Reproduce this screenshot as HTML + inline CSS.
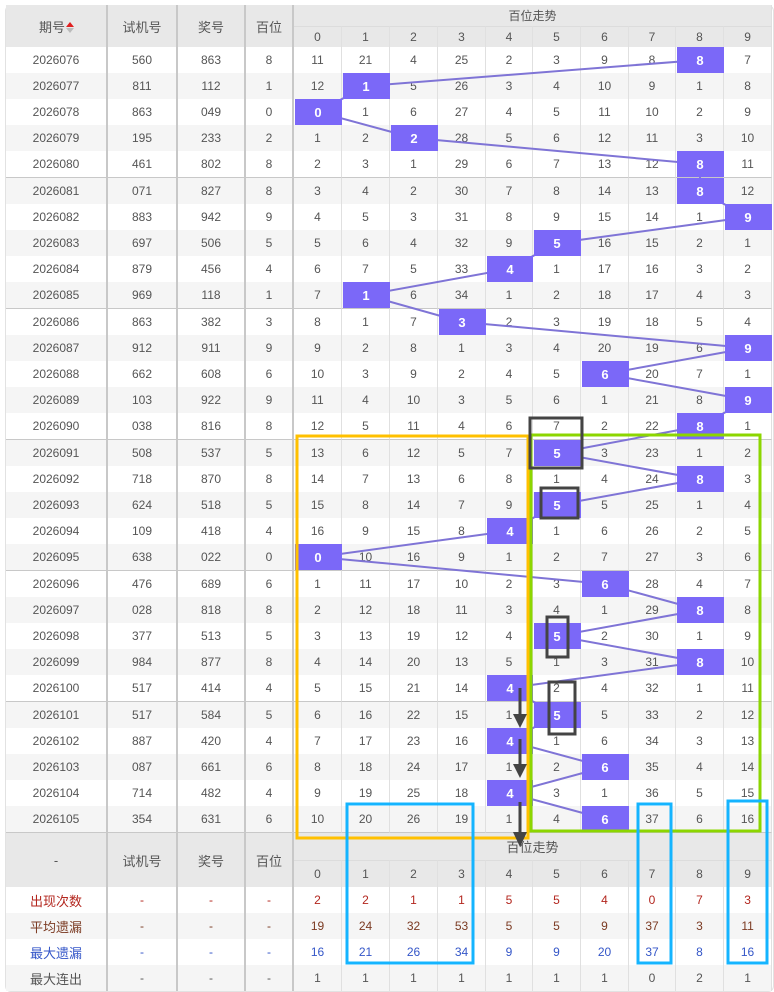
<!DOCTYPE html>
<html><head><meta charset="utf-8">
<style>
body{margin:0;background:#fff;font-family:"Liberation Sans","Noto Sans CJK SC",sans-serif;width:774px;height:992px;position:relative;overflow:hidden}
.wrap{position:absolute;left:5px;top:5px;width:767px;height:985px;border:1px solid #e2e2e2;border-radius:6px;}
table{position:absolute;left:6px;top:5px;width:766px;border-collapse:separate;border-spacing:0;table-layout:fixed}
td,th{padding:0;text-align:center;box-sizing:border-box;border-right:1px solid #e0e0e0;overflow:hidden;white-space:nowrap}
td{height:26px;font-size:12px;color:#555}
th{font-weight:normal;color:#555;background:#e8e8e8}
thead th{height:21px;font-size:12px}
thead th.big{font-size:13px}
td:nth-child(1),td:nth-child(2),td:nth-child(3),td:nth-child(4),th.s{border-right:2px solid #c8c8c8}
tbody tr:nth-child(even) td{background:#f5f5f5}
tr.g td{height:27px;border-bottom:1px solid #c8c8c8}
th.d{border-top:1px solid #dcdcdc;font-size:12px}
tfoot th{height:27px;font-size:13px}
tfoot th.d{font-size:12px}
tfoot td{font-size:12px}
tr.r1 td{color:#b3261e}
tr.r2 td{color:#7b3a22}
tr.r3 td{color:#3456c8}
tr.r1 td:first-child{color:#b3261e;font-size:13px}
tr.r2 td:first-child,tr.r3 td:first-child,tr.r4 td:first-child{font-size:13px}
tr.r2 td{background:#f5f5f5}
tr.r4 td{background:#f5f5f5}
.tri{display:inline-block;vertical-align:middle;margin-left:1px;width:7px;height:12px;position:relative}
.tri:before{content:"";position:absolute;left:0;top:0;border-left:4px solid transparent;border-right:4px solid transparent;border-bottom:5px solid #e02020}
.tri:after{content:"";position:absolute;left:0;top:6px;border-left:4px solid transparent;border-right:4px solid transparent;border-top:5px solid #bbb}
svg{position:absolute;left:0;top:0}
</style></head><body>
<div class="wrap"></div>
<table>
<colgroup><col style="width:102px"><col style="width:70px"><col style="width:68px"><col style="width:48px"><col style="width:48px"><col style="width:48px"><col style="width:48px"><col style="width:48px"><col style="width:47px"><col style="width:48px"><col style="width:48px"><col style="width:47px"><col style="width:48px"><col style="width:48px"></colgroup>
<thead>
<tr><th rowspan="2" class="s big">期号<span class="tri"></span></th><th rowspan="2" class="s big">试机号</th><th rowspan="2" class="s big">奖号</th><th rowspan="2" class="s big">百位</th><th colspan="10">百位走势</th></tr>
<tr><th class="d">0</th><th class="d">1</th><th class="d">2</th><th class="d">3</th><th class="d">4</th><th class="d">5</th><th class="d">6</th><th class="d">7</th><th class="d">8</th><th class="d">9</th></tr>
</thead>
<tbody>
<tr><td>2026076</td><td>560</td><td>863</td><td>8</td><td>11</td><td>21</td><td>4</td><td>25</td><td>2</td><td>3</td><td>9</td><td>8</td><td>8</td><td>7</td></tr>
<tr><td>2026077</td><td>811</td><td>112</td><td>1</td><td>12</td><td>1</td><td>5</td><td>26</td><td>3</td><td>4</td><td>10</td><td>9</td><td>1</td><td>8</td></tr>
<tr><td>2026078</td><td>863</td><td>049</td><td>0</td><td>0</td><td>1</td><td>6</td><td>27</td><td>4</td><td>5</td><td>11</td><td>10</td><td>2</td><td>9</td></tr>
<tr><td>2026079</td><td>195</td><td>233</td><td>2</td><td>1</td><td>2</td><td>2</td><td>28</td><td>5</td><td>6</td><td>12</td><td>11</td><td>3</td><td>10</td></tr>
<tr class="g"><td>2026080</td><td>461</td><td>802</td><td>8</td><td>2</td><td>3</td><td>1</td><td>29</td><td>6</td><td>7</td><td>13</td><td>12</td><td>8</td><td>11</td></tr>
<tr><td>2026081</td><td>071</td><td>827</td><td>8</td><td>3</td><td>4</td><td>2</td><td>30</td><td>7</td><td>8</td><td>14</td><td>13</td><td>8</td><td>12</td></tr>
<tr><td>2026082</td><td>883</td><td>942</td><td>9</td><td>4</td><td>5</td><td>3</td><td>31</td><td>8</td><td>9</td><td>15</td><td>14</td><td>1</td><td>9</td></tr>
<tr><td>2026083</td><td>697</td><td>506</td><td>5</td><td>5</td><td>6</td><td>4</td><td>32</td><td>9</td><td>5</td><td>16</td><td>15</td><td>2</td><td>1</td></tr>
<tr><td>2026084</td><td>879</td><td>456</td><td>4</td><td>6</td><td>7</td><td>5</td><td>33</td><td>4</td><td>1</td><td>17</td><td>16</td><td>3</td><td>2</td></tr>
<tr class="g"><td>2026085</td><td>969</td><td>118</td><td>1</td><td>7</td><td>1</td><td>6</td><td>34</td><td>1</td><td>2</td><td>18</td><td>17</td><td>4</td><td>3</td></tr>
<tr><td>2026086</td><td>863</td><td>382</td><td>3</td><td>8</td><td>1</td><td>7</td><td>3</td><td>2</td><td>3</td><td>19</td><td>18</td><td>5</td><td>4</td></tr>
<tr><td>2026087</td><td>912</td><td>911</td><td>9</td><td>9</td><td>2</td><td>8</td><td>1</td><td>3</td><td>4</td><td>20</td><td>19</td><td>6</td><td>9</td></tr>
<tr><td>2026088</td><td>662</td><td>608</td><td>6</td><td>10</td><td>3</td><td>9</td><td>2</td><td>4</td><td>5</td><td>6</td><td>20</td><td>7</td><td>1</td></tr>
<tr><td>2026089</td><td>103</td><td>922</td><td>9</td><td>11</td><td>4</td><td>10</td><td>3</td><td>5</td><td>6</td><td>1</td><td>21</td><td>8</td><td>9</td></tr>
<tr class="g"><td>2026090</td><td>038</td><td>816</td><td>8</td><td>12</td><td>5</td><td>11</td><td>4</td><td>6</td><td>7</td><td>2</td><td>22</td><td>8</td><td>1</td></tr>
<tr><td>2026091</td><td>508</td><td>537</td><td>5</td><td>13</td><td>6</td><td>12</td><td>5</td><td>7</td><td>5</td><td>3</td><td>23</td><td>1</td><td>2</td></tr>
<tr><td>2026092</td><td>718</td><td>870</td><td>8</td><td>14</td><td>7</td><td>13</td><td>6</td><td>8</td><td>1</td><td>4</td><td>24</td><td>8</td><td>3</td></tr>
<tr><td>2026093</td><td>624</td><td>518</td><td>5</td><td>15</td><td>8</td><td>14</td><td>7</td><td>9</td><td>5</td><td>5</td><td>25</td><td>1</td><td>4</td></tr>
<tr><td>2026094</td><td>109</td><td>418</td><td>4</td><td>16</td><td>9</td><td>15</td><td>8</td><td>4</td><td>1</td><td>6</td><td>26</td><td>2</td><td>5</td></tr>
<tr class="g"><td>2026095</td><td>638</td><td>022</td><td>0</td><td>0</td><td>10</td><td>16</td><td>9</td><td>1</td><td>2</td><td>7</td><td>27</td><td>3</td><td>6</td></tr>
<tr><td>2026096</td><td>476</td><td>689</td><td>6</td><td>1</td><td>11</td><td>17</td><td>10</td><td>2</td><td>3</td><td>6</td><td>28</td><td>4</td><td>7</td></tr>
<tr><td>2026097</td><td>028</td><td>818</td><td>8</td><td>2</td><td>12</td><td>18</td><td>11</td><td>3</td><td>4</td><td>1</td><td>29</td><td>8</td><td>8</td></tr>
<tr><td>2026098</td><td>377</td><td>513</td><td>5</td><td>3</td><td>13</td><td>19</td><td>12</td><td>4</td><td>5</td><td>2</td><td>30</td><td>1</td><td>9</td></tr>
<tr><td>2026099</td><td>984</td><td>877</td><td>8</td><td>4</td><td>14</td><td>20</td><td>13</td><td>5</td><td>1</td><td>3</td><td>31</td><td>8</td><td>10</td></tr>
<tr class="g"><td>2026100</td><td>517</td><td>414</td><td>4</td><td>5</td><td>15</td><td>21</td><td>14</td><td>4</td><td>2</td><td>4</td><td>32</td><td>1</td><td>11</td></tr>
<tr><td>2026101</td><td>517</td><td>584</td><td>5</td><td>6</td><td>16</td><td>22</td><td>15</td><td>1</td><td>5</td><td>5</td><td>33</td><td>2</td><td>12</td></tr>
<tr><td>2026102</td><td>887</td><td>420</td><td>4</td><td>7</td><td>17</td><td>23</td><td>16</td><td>4</td><td>1</td><td>6</td><td>34</td><td>3</td><td>13</td></tr>
<tr><td>2026103</td><td>087</td><td>661</td><td>6</td><td>8</td><td>18</td><td>24</td><td>17</td><td>1</td><td>2</td><td>6</td><td>35</td><td>4</td><td>14</td></tr>
<tr><td>2026104</td><td>714</td><td>482</td><td>4</td><td>9</td><td>19</td><td>25</td><td>18</td><td>4</td><td>3</td><td>1</td><td>36</td><td>5</td><td>15</td></tr>
<tr class="g"><td>2026105</td><td>354</td><td>631</td><td>6</td><td>10</td><td>20</td><td>26</td><td>19</td><td>1</td><td>4</td><td>6</td><td>37</td><td>6</td><td>16</td></tr>
</tbody>
<tfoot>
<tr><th rowspan="2" class="s">-</th><th rowspan="2" class="s">试机号</th><th rowspan="2" class="s">奖号</th><th rowspan="2" class="s">百位</th><th colspan="10">百位走势</th></tr>
<tr><th class="d">0</th><th class="d">1</th><th class="d">2</th><th class="d">3</th><th class="d">4</th><th class="d">5</th><th class="d">6</th><th class="d">7</th><th class="d">8</th><th class="d">9</th></tr>
<tr class="r1"><td>出现次数</td><td>-</td><td>-</td><td>-</td><td>2</td><td>2</td><td>1</td><td>1</td><td>5</td><td>5</td><td>4</td><td>0</td><td>7</td><td>3</td></tr>
<tr class="r2"><td>平均遗漏</td><td>-</td><td>-</td><td>-</td><td>19</td><td>24</td><td>32</td><td>53</td><td>5</td><td>5</td><td>9</td><td>37</td><td>3</td><td>11</td></tr>
<tr class="r3"><td>最大遗漏</td><td>-</td><td>-</td><td>-</td><td>16</td><td>21</td><td>26</td><td>34</td><td>9</td><td>9</td><td>20</td><td>37</td><td>8</td><td>16</td></tr>
<tr class="r4"><td>最大连出</td><td>-</td><td>-</td><td>-</td><td>1</td><td>1</td><td>1</td><td>1</td><td>1</td><td>1</td><td>1</td><td>0</td><td>2</td><td>1</td></tr>
</tfoot>
</table>
<svg width="774" height="992" viewBox="0 0 774 992" font-family="Liberation Sans, sans-serif">
<polyline fill="none" stroke="#7f74d6" stroke-width="2" points="700,60 366,86 318,112 414,138 700,164 700,191 748,217 557,243 509,269 366,295 462,322 748,348 605,374 748,400 700,426 557,453 700,479 557,505 509,531 318,557 605,584 700,610 557,636 700,662 509,688 557,715 509,741 605,767 509,793 605,819"/>
<g fill="#7b68f8">
<rect x="677" y="47" width="47" height="26"/>
<rect x="343" y="73" width="47" height="26"/>
<rect x="295" y="99" width="47" height="26"/>
<rect x="391" y="125" width="47" height="26"/>
<rect x="677" y="151" width="47" height="26"/>
<rect x="677" y="178" width="47" height="26"/>
<rect x="725" y="204" width="47" height="26"/>
<rect x="534" y="230" width="47" height="26"/>
<rect x="487" y="256" width="46" height="26"/>
<rect x="343" y="282" width="47" height="26"/>
<rect x="439" y="309" width="47" height="26"/>
<rect x="725" y="335" width="47" height="26"/>
<rect x="582" y="361" width="47" height="26"/>
<rect x="725" y="387" width="47" height="26"/>
<rect x="677" y="413" width="47" height="26"/>
<rect x="534" y="440" width="47" height="26"/>
<rect x="677" y="466" width="47" height="26"/>
<rect x="534" y="492" width="47" height="26"/>
<rect x="487" y="518" width="46" height="26"/>
<rect x="295" y="544" width="47" height="26"/>
<rect x="582" y="571" width="47" height="26"/>
<rect x="677" y="597" width="47" height="26"/>
<rect x="534" y="623" width="47" height="26"/>
<rect x="677" y="649" width="47" height="26"/>
<rect x="487" y="675" width="46" height="26"/>
<rect x="534" y="702" width="47" height="26"/>
<rect x="487" y="728" width="46" height="26"/>
<rect x="582" y="754" width="47" height="26"/>
<rect x="487" y="780" width="46" height="26"/>
<rect x="582" y="806" width="47" height="26"/>
</g>
<g fill="#fff" font-size="13" font-weight="bold" text-anchor="middle">
<text x="700" y="65">8</text><text x="366" y="91">1</text><text x="318" y="117">0</text><text x="414" y="143">2</text><text x="700" y="169">8</text>
<text x="700" y="196">8</text><text x="748" y="222">9</text><text x="557" y="248">5</text><text x="510" y="274">4</text><text x="366" y="300">1</text>
<text x="462" y="327">3</text><text x="748" y="353">9</text><text x="605" y="379">6</text><text x="748" y="405">9</text><text x="700" y="431">8</text>
<text x="557" y="458">5</text><text x="700" y="484">8</text><text x="557" y="510">5</text><text x="510" y="536">4</text><text x="318" y="562">0</text>
<text x="605" y="589">6</text><text x="700" y="615">8</text><text x="557" y="641">5</text><text x="700" y="667">8</text><text x="510" y="693">4</text>
<text x="557" y="720">5</text><text x="510" y="746">4</text><text x="605" y="772">6</text><text x="510" y="798">4</text><text x="605" y="824">6</text>
</g>
<g fill="none" stroke-width="3">
<rect x="297" y="436" width="231" height="402" stroke="#ffc000"/>
<rect x="531" y="435" width="229" height="396" stroke="#8cd600"/>
<rect x="347" y="804" width="126" height="159" stroke="#14b4ff"/>
<rect x="638" y="804" width="33" height="159" stroke="#14b4ff"/>
<rect x="728" y="801" width="39" height="162" stroke="#14b4ff"/>
<g stroke="#444">
<rect x="530" y="418" width="52" height="50"/>
<rect x="541" y="488" width="37" height="30"/>
<rect x="547" y="617" width="21" height="40"/>
<rect x="549" y="682" width="26" height="52"/>
<line x1="520" y1="688" x2="520" y2="718"/>
<line x1="520" y1="739" x2="520" y2="768"/>
<line x1="520" y1="802" x2="520" y2="836"/>
</g>
</g>
<g fill="#444">
<polygon points="513,714 527,714 520,728"/>
<polygon points="513,764 527,764 520,778"/>
<polygon points="513,832 527,832 520,847"/>
</g>
</svg>
</body></html>
